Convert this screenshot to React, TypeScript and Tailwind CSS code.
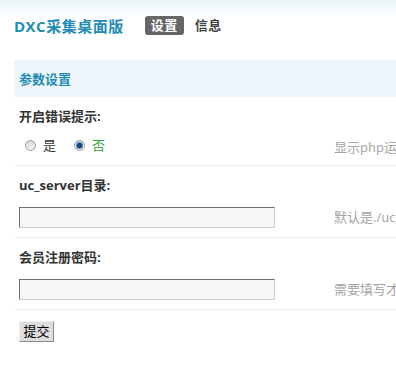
const font = 'font-["Open_Sans","Noto_Sans_CJK_SC",sans-serif]';

function Radio({ checked }: { checked?: boolean }) {
  return (
    <span className="w-[11px] h-[11px] rounded-full border border-[#9a9a9a] bg-gradient-to-b from-[#d8d8d8] to-[#f4f4f4] flex items-center justify-center">
      {checked && <span className="w-[5px] h-[5px] rounded-full bg-[#1f3f66] shadow-[0_0_0_1px_#4d8fc6]" />}
    </span>
  );
}

function Field({ label, tip }: { label: string; tip: string }) {
  return (
    <div className="border-b border-[#ececec] pl-[5px] pb-[9px]">
      <div className="pt-[10px] h-[29px] leading-[18px] text-[13px] font-bold text-[#333]">{label}</div>
      <div className="flex items-center mt-[12px]">
        <div className="w-[315px]">
          <div className="w-[256px] h-[21px] bg-[#f6f6f6] border border-t-[#6f6f6f] border-l-[#6f6f6f] border-b-[#cfcfcf] border-r-[#cfcfcf]" />
        </div>
        <span className="text-[13px] text-[#a3a3a3] whitespace-nowrap">{tip}</span>
      </div>
    </div>
  );
}

export default function App() {
  return (
    <div className={`w-[396px] h-[371px] overflow-hidden bg-white ${font}`}>
      <div className="bg-gradient-to-b from-[#e9f5fa] to-white to-[30%] h-[60px] pl-[14px] pt-[15px] flex items-start">
        <h1 className="text-[15px] leading-[22px] font-bold text-[#1e8cb6] tracking-[0.5px]">DXC采集桌面版</h1>
        <nav className="flex items-center ml-[21px] mt-[1px] gap-[11px]">
          <span className="h-[19px] px-[6px] rounded-[3px] bg-[#666] text-white text-[13px] font-bold leading-[19px] tracking-[0.5px]">设置</span>
          <span className="text-[13px] font-bold text-[#444] leading-[19px] tracking-[0.5px]">信息</span>
        </nav>
      </div>

      <div className="ml-[14px] w-[600px]">
        <div className="h-[37px] bg-[#f0f7fc] pl-[5px] flex items-center">
          <span className="text-[13px] font-bold text-[#1e8cb6] pt-[2px]">参数设置</span>
        </div>

        <div className="border-b border-[#ececec] pl-[5px] pb-[9px]">
          <div className="pt-[10px] h-[29px] leading-[18px] text-[13px] font-bold text-[#333]">开启错误提示:</div>
          <div className="flex items-center mt-[9px] h-[21px]">
            <div className="w-[315px] flex items-center pl-[6px] text-[13px]">
              <Radio />
              <span className="ml-[7px] text-[#333]">是</span>
              <span className="ml-[18px]">
                <Radio checked />
              </span>
              <span className="ml-[7px] text-[#2ea52e]">否</span>
            </div>
            <span className="text-[13px] text-[#a3a3a3] whitespace-nowrap mt-[4px]">显示php运行错误信息</span>
          </div>
        </div>

        <Field label="uc_server目录:" tip="默认是./uc_server" />
        <Field label="会员注册密码:" tip="需要填写才能注册会员" />

        <div className="pl-[5px] pt-[8px]">
          <button className="w-[35px] h-[21px] bg-[#dedede] border border-t-[#f0f0f0] border-l-[#f0f0f0] border-b-[#8a8a8a] border-r-[#8a8a8a] text-[13px] text-black leading-[18px]">
            提交
          </button>
        </div>
      </div>
    </div>
  );
}
